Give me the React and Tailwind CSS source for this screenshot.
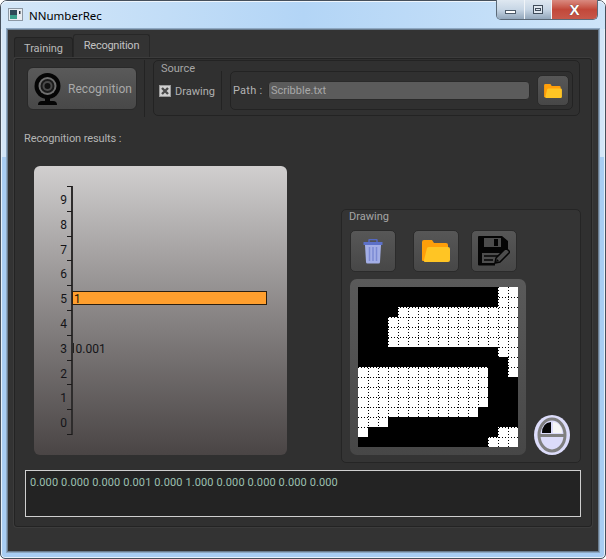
import React from "react";

const ROWS = [
  [[14,15]],[[14,15]],[[4,15]],[[3,15]],[[3,15]],[[3,15]],[[14,15]],[[15,15]],
  [[0,12],[15,15]],[[0,12]],[[0,12]],[[0,12]],[[0,11]],[[0,2]],[[0,0],[14,15]],[[13,15]],
];

function Scribble() {
  const gridLines = [];
  for (let i = 1; i < 16; i++) {
    gridLines.push(<line key={"v" + i} x1={i * 10 + 0.5} y1="0" x2={i * 10 + 0.5} y2="160" />);
    gridLines.push(<line key={"h" + i} x1="0" y1={i * 10 + 0.5} x2="160" y2={i * 10 + 0.5} />);
  }
  return (
    <svg width="160" height="160" viewBox="0 0 160 160" className="block">
      <rect width="160" height="160" fill="#000" />
      {ROWS.map((spans, r) =>
        spans.map(([a, b]) => (
          <rect key={r + "-" + a} x={a * 10} y={r * 10} width={(b - a + 1) * 10} height="10" fill="#fff" />
        ))
      )}
      <g stroke="#000" strokeWidth="1" strokeDasharray="1 2">{gridLines}</g>
    </svg>
  );
}

function Webcam() {
  return (
    <svg width="27" height="32" viewBox="0 0 27 32">
      <circle cx="13.500" cy="13" r="13" fill="#050505" />
      <circle cx="13.500" cy="13" r="9" fill="#6e6e6e" />
      <circle cx="13.500" cy="13" r="7" fill="#1a1a1a" />
      <circle cx="13.500" cy="13" r="5" fill="#4a4a4a" />
      <circle cx="13.500" cy="13" r="3" fill="#111" />
      <rect x="11" y="25" width="5" height="4" fill="#050505" />
      <path d="M4 32 Q4 28 8 28 H19 Q23 28 23 32 Z" fill="#050505" />
    </svg>
  );
}

function Folder({ w, h }) {
  return (
    <svg width={w} height={h} viewBox="0 0 28 22">
      <path d="M0 2 Q0 0 2 0 H10 L12 3 H24 Q26 3 26 5 V8 H7 L4 21 H1 Q0 21 0 20 Z" fill="#ff9f0a" />
      <path d="M5 8 Q5.400 7 7 7 H26 Q28 7 28 9 V20 Q28 22 26 22 H3 Q1.500 22 2 20 Z" fill="#ffc524" />
    </svg>
  );
}

function Trash() {
  return (
    <svg width="20" height="25" viewBox="0 0 20 25">
      <path d="M6 3 V1.500 Q6 0.500 7 0.500 H13 Q14 0.500 14 1.500 V3" fill="none" stroke="#5468c0" strokeWidth="1.500" />
      <path d="M0.500 3 H19.500 V6 H0.500 Z" fill="#5c70c8" />
      <path d="M2 6 H18 L17 23 Q17 24.500 15.500 24.500 H4.500 Q3 24.500 3 23 Z" fill="#a3aee6" />
      <path d="M6.500 8 V22 M10 8 V22 M13.500 8 V22" stroke="#7c8ad4" strokeWidth="1.500" />
    </svg>
  );
}

function SavePen() {
  return (
    <svg width="32" height="30" viewBox="0 0 32 30">
      <path d="M1 0 H24 L30 5 V14 L17 27 V29.500 H1 Q0 29.500 0 28.500 V1 Q0 0 1 0 Z" fill="#050505" />
      <rect x="6" y="2" width="17" height="9" fill="#4d4d4d" />
      <rect x="16" y="3" width="4" height="7" fill="#050505" />
      <rect x="4" y="17" width="20" height="10" fill="#4d4d4d" />
      <path d="M6 20 H20 M6 24 H15" stroke="#050505" strokeWidth="1.500" />
      <path d="M17 27 L18 22 L28 12 L32 16 L22 26 Z" fill="#4d4d4d" stroke="#050505" strokeWidth="1.500" />
      <path d="M18 26 L19 23 L21 25 Z" fill="#050505" />
    </svg>
  );
}

function MouseIcon() {
  return (
    <svg width="36" height="40" viewBox="0 0 36 40">
      <ellipse cx="18" cy="20" rx="18" ry="20" fill="#dcdcfa" />
      <ellipse cx="18" cy="20" rx="13" ry="16" fill="#dcdcfa" stroke="#808080" strokeWidth="3" />
      <path d="M6 20.500 H30" stroke="#808080" strokeWidth="3" />
      <path d="M8 18 Q8 8 17 7 V18 Z" fill="#050505" />
      <path d="M19 7 Q28 8 28 18 H19 Z" fill="#f6f6f6" />
    </svg>
  );
}

function AppIcon() {
  return (
    <svg width="15" height="13" viewBox="0 0 15 13" className="block">
      <rect x="0.500" y="0.500" width="14" height="12" fill="#e8edf2" stroke="#8c98a4" />
      <rect x="2" y="2" width="7" height="9" fill="#2d4a58" />
      <rect x="2" y="7" width="7" height="4" fill="#3aa08c" />
      <rect x="11" y="3" width="1.500" height="3" fill="#303840" />
    </svg>
  );
}

function CheckMark() {
  return (
    <svg width="12" height="12" viewBox="0 0 12 12" className="block">
      <rect x="0.500" y="0.500" width="11" height="11" fill="#cfcfcf" stroke="#9a9a9a" />
      <path d="M3 3 L9 9 M9 3 L3 9" stroke="#4a4a4a" strokeWidth="2.400" />
    </svg>
  );
}

function Chart() {
  const ticks = [0, 1, 2, 3, 4, 5, 6, 7, 8, 9, 10].map((i) => 20.5 + i * 24.8);
  const labels = [9, 8, 7, 6, 5, 4, 3, 2, 1, 0];
  const font = "Roboto, sans-serif";
  return (
    <svg width="253" height="289" viewBox="0 0 253 289" className="block">
      <rect x="37" y="20" width="2" height="249" fill="#2e2c2c" />
      {ticks.map((y) => (
        <rect key={y} x="33" y={Math.round(y - 0.5)} width="5" height="1" fill="#1c1a1a" />
      ))}
      {labels.map((n, i) => (
        <text key={n} x="33" y={38 + i * 24.8} textAnchor="end" fontSize="12" fontFamily={font} fill="#141418">{n}</text>
      ))}
      <rect x="38.500" y="125.500" width="194" height="13" fill="#ff9f2e" stroke="#2a1e10" />
      <text x="40" y="137" fontSize="12" fontFamily={font} fill="#1a1208">1</text>
      <rect x="39" y="177" width="1" height="10" fill="#222" />
      <text x="41.500" y="187" fontSize="12" fontFamily={font} fill="#141418">0.001</text>
    </svg>
  );
}

const toolBtn = "flex items-center justify-center rounded-[5px] border border-[#2b2b2b] bg-gradient-to-b from-[#575757] to-[#474747]";

export default function App() {
  return (
    <div className="w-[606px] h-[559px] overflow-hidden bg-white font-['Roboto',sans-serif] text-[11px] leading-none">
      <div className="w-[606px] h-[559px] flex flex-col rounded-t-[7px] rounded-b-[5px] border border-[#46505c] bg-gradient-to-b from-[#d3e6f8] from-[28%] to-[#a8cdf3] to-[28%] shadow-[inset_0_0_0_1px_#e6f0fa]">
        <div className="h-[28px] shrink-0 flex items-start rounded-t-[6px] bg-gradient-to-r from-[#d4e7f8] via-[#b3d5f6] to-[#cde4f9] shadow-[inset_0_1px_0_#eef5fc]">
          <div className="ml-[7px] mt-[7px]"><AppIcon /></div>
          <span className="ml-[6px] mt-[6px] font-['Noto_Sans',sans-serif] text-[11.500px] leading-[17px] text-black">NNumberRec</span>
          <div className="ml-auto mr-[7px] -mt-px flex h-[20px] w-[102px] rounded-b-[5px] border border-t-0 border-[#5c6a78] overflow-hidden">
            <div className="w-[28px] flex items-end justify-center pb-[5px] border-r border-[#f0f4f8] bg-gradient-to-b from-[#dfe8f1] via-[#c7d6e5] via-50% to-[#93a7bb]">
              <div className="w-[11px] h-[4px] bg-white border border-[#4c5a68]" />
            </div>
            <div className="w-[27px] flex items-center justify-center border-r border-[#f0f4f8] bg-gradient-to-b from-[#dfe8f1] via-[#c7d6e5] via-50% to-[#93a7bb]">
              <div className="w-[10px] h-[9px] border border-[#3f4c5a] bg-[#dfe7ef] flex items-center justify-center">
                <div className="w-[6px] h-[3px] border border-[#3f4c5a]" />
              </div>
            </div>
            <div className="flex-1 flex items-center justify-center bg-gradient-to-b from-[#d98a80] via-[#c2483a] via-50% to-[#c7584a]">
              <span className="font-['Liberation_Sans',sans-serif] font-bold text-[15px] text-white [text-shadow:0_0_1px_#333] leading-none">X</span>
            </div>
          </div>
        </div>

        <div className="mx-[6px] h-[523px] shrink-0 border border-[#6a7c8e] outline outline-1 outline-[#8ea8c2] bg-[#333333] text-[#b9b9b9] flex flex-col">
          <div className="h-[28px] shrink-0 flex items-end pl-[6px]">
            <div className="w-[59px] h-[20px] mb-[1px] border border-b-0 border-[#232323] rounded-t-[3px] bg-[#2d2d2d] flex items-center justify-center pt-[1px] tracking-[-0.05px]">Training</div>
            <div className="w-[77px] h-[24px] border border-b-0 border-[#272727] rounded-t-[3px] bg-[#333333] flex items-center justify-center pb-[2px] text-[#c2c2c2] tracking-[-0.25px]">Recognition</div>
          </div>
          <div className="mx-[6px] h-[469px] border border-[#232323] rounded-[3px] bg-[#303030] shadow-[0_0_0_1px_#3c3c3c] flex flex-col">
            {/* toolbar */}
            <div className="flex h-[57px] mt-px items-stretch">
              <div className="ml-[12px] mt-[7px] w-[110px] h-[43px] flex items-center rounded-[6px] border border-[#292929] bg-gradient-to-b from-[#5a5a5a] to-[#484848] pl-[6px]">
                <Webcam />
                <span className="ml-[7px] text-[12px] tracking-[0.05px] text-[#a9a9a9]">Recognition</span>
              </div>
              <div className="ml-[7px] w-px bg-[#232323]" />
              <div className="ml-[8px] w-[427px] h-[56px] rounded-[5px] border border-[#232323] flex items-center relative">
                <span className="absolute left-[6px] top-[2px] px-px text-[#a6a6a6]">Source</span>
                <div className="ml-[5px] mt-[6px]"><CheckMark /></div>
                <span className="ml-[4px] mt-[6px] text-[#b0b0b0]">Drawing</span>
                <div className="ml-[6px] mt-[5px] w-px h-[39px] bg-[#232323]" />
                <div className="ml-[8px] mt-[5px] w-[343px] h-[39px] rounded-[5px] border border-[#232323] flex items-center">
                  <span className="ml-[2px] w-[35px] text-[#b4b4b4] tracking-[0.25px]">Path :</span>
                  <div className="w-[262px] h-[19px] rounded-[4px] border border-[#2a2a2a] bg-[#5b5b5b] flex items-center pl-[2px] text-[#a8a8a8]">Scribble.txt</div>
                  <div className={toolBtn + " ml-[7px] w-[32px] h-[31px]"}><Folder w={18} h={14} /></div>
                </div>
              </div>
            </div>

            <div className="ml-[9px] mt-[16px] text-[#b4b4b4] leading-[12px] tracking-[-0.1px]">Recognition results :</div>

            {/* chart + drawing */}
            <div className="flex items-start mt-[21px]">
              <div className="ml-[19px] w-[253px] h-[289px] rounded-[6px] bg-gradient-to-b from-[#d1cfcf] to-[#4a4545] overflow-hidden shrink-0"><Chart /></div>
              <div className="ml-[54px] mt-[43px] w-[240px] h-[254px] rounded-[5px] border border-[#252525] bg-[#343434] relative">
                <span className="absolute left-[7px] top-[1px] text-[#a6a6a6]">Drawing</span>
                <div className="flex ml-[8px] mt-[20px]">
                  <div className={toolBtn + " w-[46px] h-[42px]"}><Trash /></div>
                  <div className={toolBtn + " w-[46px] h-[42px] ml-[17px]"}><Folder w={28} h={22} /></div>
                  <div className={toolBtn + " w-[46px] h-[42px] ml-[12px]"}><SavePen /></div>
                </div>
                <div className="flex items-end">
                  <div className="ml-[8px] mt-[7px] w-[176px] h-[176px] rounded-[7px] bg-gradient-to-b from-[#5a5a5a] to-[#474747] p-[8px]"><Scribble /></div>
                  <div className="ml-[8px]"><MouseIcon /></div>
                </div>
              </div>
            </div>

            {/* output */}
            <div className="ml-[10px] mt-[7px] w-[556px] h-[47px] border border-[#cfcfcf] bg-[#232323] pl-[4px] pt-[6px] text-[#9cc0b0] leading-[12px] tracking-[0.12px]">
              0.000 0.000 0.000 0.001 0.000 1.000 0.000 0.000 0.000 0.000
            </div>
          </div>
        </div>
      </div>
    </div>
  );
}
